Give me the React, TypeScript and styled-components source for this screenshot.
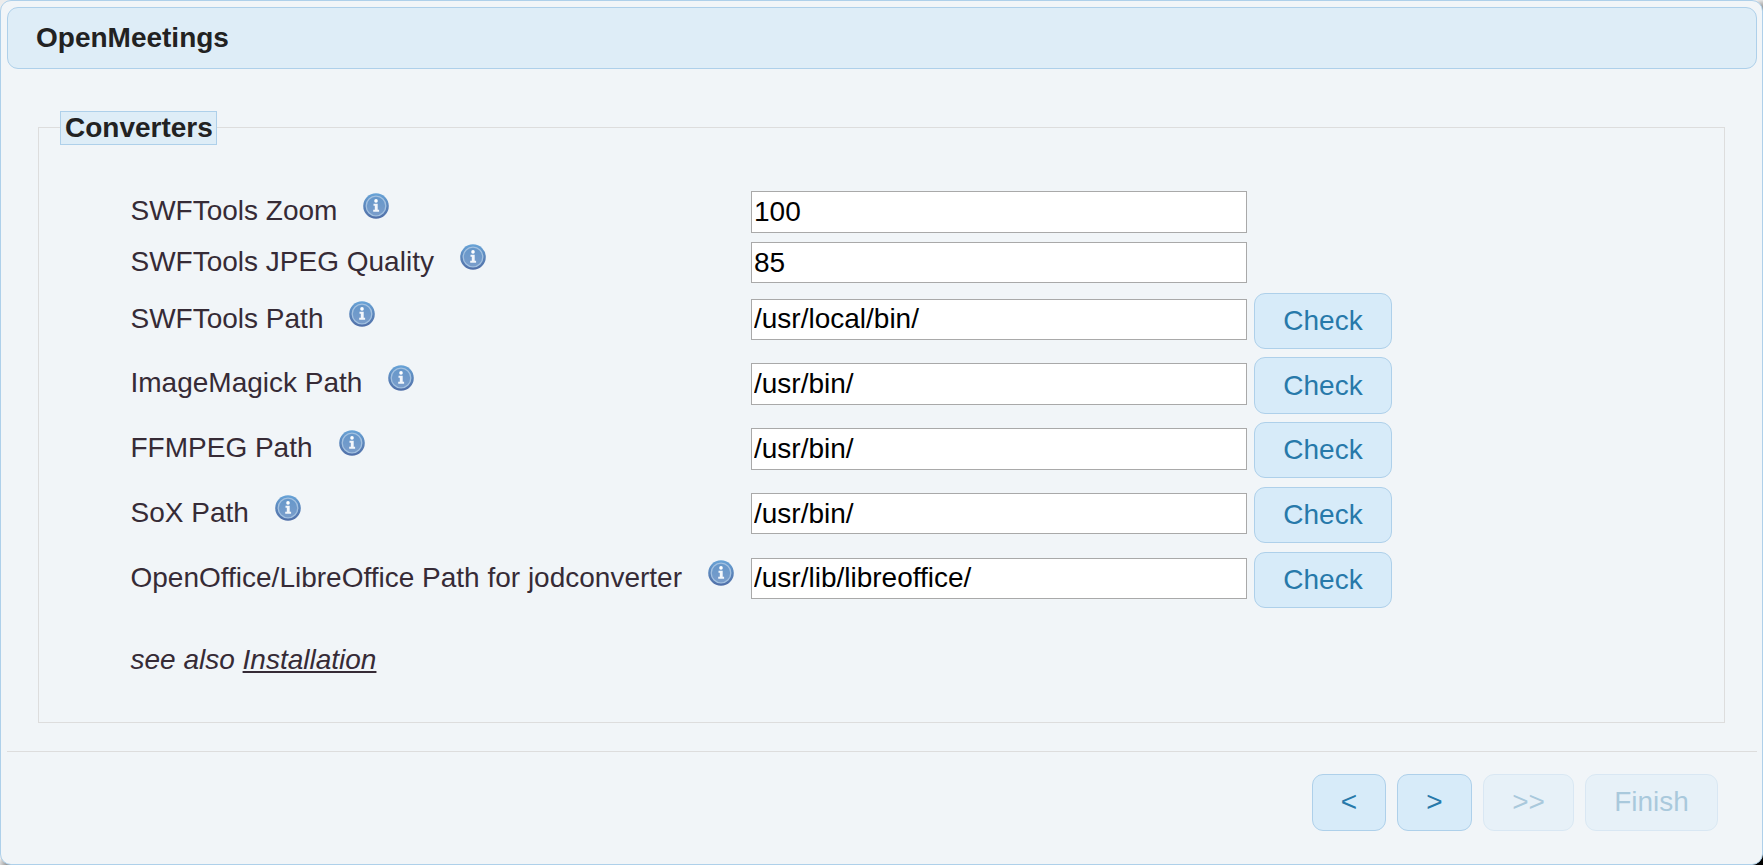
import React from "react";
import styled, { createGlobalStyle } from "styled-components";

const GlobalStyle = createGlobalStyle`
  *, *::before, *::after { box-sizing: border-box; }
  html, body { margin: 0; padding: 0; }
  body {
    font-family: "Liberation Sans", Arial, sans-serif;
    font-size: 28px;
    color: #362b36;
    background:
      radial-gradient(circle at 100% 100%, #000 0 14px, transparent 15px),
      radial-gradient(circle at 100% 12px, #666 0, #e4e4e4 12px, transparent 13px),
      radial-gradient(circle at 12px 100%, #666 0, #d8d8d8 12px, transparent 13px),
      #ececec;
  }
`;

const Dialog = styled.div`
  width: 1763px;
  height: 865px;
  padding: 6px 5px 6px 6px;
  display: flex;
  flex-direction: column;
  background: #f1f5f8;
  border: 1px solid #aed0ea;
  border-radius: 11px;
`;

const TitleBar = styled.header`
  height: 62px;
  padding: 0 28px;
  line-height: 59px;
  font-weight: bold;
  color: #222222;
  background: #deedf7;
  border: 1px solid #aed0ea;
  border-radius: 11px;
`;

const Content = styled.main`
  flex: 1;
  padding: 41px 32px 0 31px;
`;

const Group = styled.fieldset`
  height: 613px;
  margin: 0;
  padding: 47px 0 0 92px;
  border: 1px solid #dddddd;
`;

const Legend = styled.legend`
  position: relative;
  top: 1px;
  width: 157px;
  height: 34px;
  margin-left: -71px;
  padding: 0 4px;
  line-height: 32px;
  font-weight: bold;
  white-space: nowrap;
  color: #222222;
  background: #deedf7;
  border: 1px solid #aed0ea;
`;

const Row = styled.div<{ $height: number }>`
  display: grid;
  grid-template-columns: 620px 496px auto;
  justify-content: start;
  align-items: start;
  height: ${(p) => p.$height}px;
`;

const Label = styled.label<{ $offset: number }>`
  display: flex;
  align-items: flex-start;
  gap: 25px;
  padding-top: ${(p) => p.$offset}px;
  line-height: 39px;
  white-space: nowrap;
  margin-left: -0.5px;
`;

const Field = styled.input<{ $offset: number; $height: number; $raised?: boolean }>`
  width: 496px;
  height: ${(p) => p.$height}px;
  margin: ${(p) => p.$offset}px 0 0;
  padding: ${(p) => (p.$raised ? "0 2px 2px" : "1px 2px")};
  font: inherit;
  color: #000;
  background: #fff;
  border: 1px solid #a9a9a9;
  border-radius: 0;
  outline: none;
`;

const Button = styled.button<{ $width: number; $height?: number }>`
  width: ${(p) => p.$width}px;
  height: ${(p) => p.$height ?? 57}px;
  padding: 0;
  font: inherit;
  line-height: 54px;
  text-align: center;
  color: #2779aa;
  background: #d7ebf9;
  border: 1px solid #aed0ea;
  border-radius: 11px;
  &:disabled { opacity: 0.35; }
`;

const CheckButton = styled(Button)`
  margin-left: 7px;
`;

const NavButton = styled(Button)`
  padding-bottom: 2px;
  line-height: 53px;
`;

const SeeAlso = styled.p`
  margin: 36px 0 0 -0.5px;
  line-height: 32px;
  font-style: italic;
`;

const DocLink = styled.a`
  color: inherit;
  text-decoration: underline;
`;

const ButtonPane = styled.footer`
  height: 107px;
  padding: 22px 39px 0 0;
  display: flex;
  justify-content: flex-end;
  gap: 11px;
  border-top: 1px solid #dddddd;
`;

const IconSvg = styled.svg`
  flex: none;
  width: 28px;
  height: 28px;
  margin-top: 1px;
`;

const InfoIcon = () => (
  <IconSvg viewBox="0 0 28 28" aria-hidden="true">
    <defs>
      <linearGradient id="rim" x1="0" y1="0" x2="0" y2="1">
        <stop offset="0" stopColor="#68a4d8" />
        <stop offset="0.5" stopColor="#5c86bb" />
        <stop offset="1" stopColor="#506fa8" />
      </linearGradient>
      <linearGradient id="disc" x1="0" y1="0" x2="0" y2="1">
        <stop offset="0" stopColor="#6597ca" />
        <stop offset="1" stopColor="#7a9dcb" />
      </linearGradient>
    </defs>
    <circle cx="14" cy="14" r="12.8" fill="url(#rim)" />
    <circle cx="14" cy="14" r="9.8" fill="url(#disc)" stroke="#a3c1e0" strokeWidth="1.3" />
    <circle cx="14" cy="8.9" r="1.8" fill="#fff" />
    <path d="M11.5 11.8h4.2v5.9h1.4v2.1h-5.9v-2.1h1.6v-3.9h-1.3z" fill="#f2f6fb" />
  </IconSvg>
);

interface Setting {
  label: string;
  value: string;
  rowHeight: number;
  fieldHeight: number;
  checkHeight?: number;
  raised?: boolean;
}

const settings: Setting[] = [
  { label: "SWFTools Zoom", value: "100", rowHeight: 51, fieldHeight: 42 },
  { label: "SWFTools JPEG Quality", value: "85", rowHeight: 51, fieldHeight: 41 },
  { label: "SWFTools Path", value: "/usr/local/bin/", rowHeight: 64, fieldHeight: 41, checkHeight: 56, raised: true },
  { label: "ImageMagick Path", value: "/usr/bin/", rowHeight: 65, fieldHeight: 42, checkHeight: 57 },
  { label: "FFMPEG Path", value: "/usr/bin/", rowHeight: 65, fieldHeight: 42, checkHeight: 56 },
  { label: "SoX Path", value: "/usr/bin/", rowHeight: 65, fieldHeight: 41, checkHeight: 56 },
  {
    label: "OpenOffice/LibreOffice Path for jodconverter",
    value: "/usr/lib/libreoffice/",
    rowHeight: 56,
    fieldHeight: 41,
    checkHeight: 56,
    raised: true,
  },
];

export default function App() {
  return (
    <>
      <GlobalStyle />
      <Dialog>
        <TitleBar>OpenMeetings</TitleBar>
        <Content>
          <Group>
            <Legend>Converters</Legend>
            {settings.map((s) => {
              const offset = s.checkHeight ? 6 : 0;
              return (
                <Row key={s.label} $height={s.rowHeight}>
                  <Label $offset={offset}>
                    {s.label}
                    <InfoIcon />
                  </Label>
                  <Field
                    $offset={offset}
                    $height={s.fieldHeight}
                    $raised={s.raised}
                    defaultValue={s.value}
                    spellCheck={false}
                  />
                  {s.checkHeight && (
                    <CheckButton $width={138} $height={s.checkHeight}>
                      Check
                    </CheckButton>
                  )}
                </Row>
              );
            })}
            <SeeAlso>
              see also <DocLink>Installation</DocLink>
            </SeeAlso>
          </Group>
        </Content>
        <ButtonPane>
          <NavButton $width={74}>&lt;</NavButton>
          <NavButton $width={75}>&gt;</NavButton>
          <NavButton $width={91} disabled>&gt;&gt;</NavButton>
          <NavButton $width={133} disabled>Finish</NavButton>
        </ButtonPane>
      </Dialog>
    </>
  );
}
